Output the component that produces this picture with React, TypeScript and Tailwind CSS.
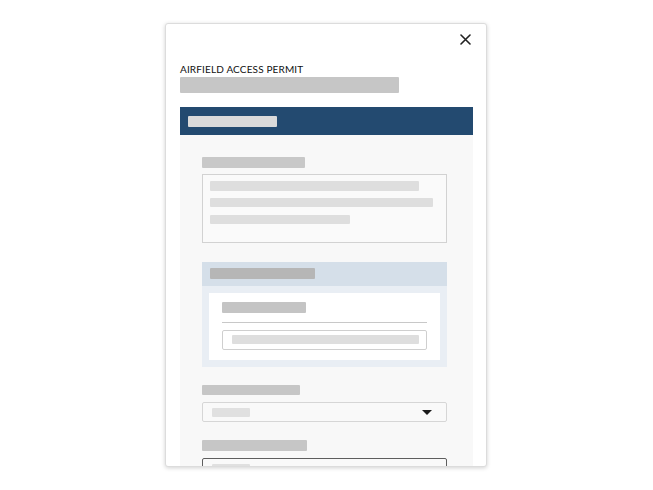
import React from "react";

// Placeholder bar used for skeleton text
function Bar({ className }: { className: string }) {
  return <div className={`rounded-[1px] ${className}`} />;
}

function Caret() {
  return (
    <svg width="10" height="5" viewBox="0 0 10 5" className="block">
      <path d="M0 0 L10 0 L5 5 Z" fill="#1a1a1a" />
    </svg>
  );
}

export default function App() {
  return (
    <div className="w-[653px] h-[490px] bg-white pt-[23px] pl-[165px] font-['Lato','Liberation_Sans',sans-serif]">
      <div className="w-[322px] h-[444px] overflow-hidden rounded-[3px] border border-[#dcdcdc] bg-white pl-[14px] pr-[13px] shadow-[0_1px_4px_rgba(0,0,0,0.18)]">
        {/* close */}
        <div className="flex justify-end pt-[9px] pr-[2px]">
          <button className="w-[12px] h-[12px] flex items-center justify-center">
            <svg width="11" height="11" viewBox="0 0 11 11">
              <path d="M1 1 L10 10 M10 1 L1 10" stroke="#222" strokeWidth="1.6" strokeLinecap="round" />
            </svg>
          </button>
        </div>

        {/* title */}
        <div className="mt-[17px] text-[10px] leading-[14px] tracking-[0.15px] text-[#111] uppercase">
          Airfield Access Permit
        </div>
        <Bar className="mt-[1px] w-[219px] h-[16px] bg-[#c6c6c6]" />

        {/* panel header */}
        <div className="mt-[14px] h-[28px] bg-[#234a70] pl-[8px] pt-[9px]">
          <Bar className="w-[89px] h-[11px] bg-[#dadada]" />
        </div>

        {/* panel body */}
        <div className="bg-[#f8f8f8] pl-[22px] pr-[26px] pt-[22px] pb-[20px]">
          <Bar className="w-[103px] h-[11px] bg-[#c8c8c8]" />
          <div className="mt-[6px] h-[69px] border border-[#d2d2d2] bg-[#fafafa] px-[7px] pt-[6px]">
            <Bar className="w-[209px] h-[10px] bg-[#dedede]" />
            <Bar className="mt-[7px] w-[223px] h-[9px] bg-[#dedede]" />
            <Bar className="mt-[8px] w-[140px] h-[9px] bg-[#dedede]" />
          </div>

          {/* group */}
          <div className="mt-[19px] bg-[#e9eef4]">
            <div className="h-[24px] bg-[#d5dfe9] pl-[8px] pt-[6px]">
              <Bar className="w-[105px] h-[11px] bg-[#b6b6b6]" />
            </div>
            <div className="p-[7px]">
              <div className="h-[67px] bg-white px-[13px] pt-[9px]">
                <Bar className="w-[84px] h-[11px] bg-[#c4c4c4]" />
                <div className="mt-[9px] h-px bg-[#c8c8c8]" />
                <div className="mt-[7px] h-[20px] border border-[#cfcfcf] rounded-[2px] pl-[9px] pt-[4px]">
                  <Bar className="w-[187px] h-[9px] bg-[#dedede]" />
                </div>
              </div>
            </div>
          </div>

          {/* select 1 */}
          <Bar className="mt-[18px] w-[98px] h-[10px] bg-[#c6c6c6]" />
          <div className="mt-[7px] h-[20px] border border-[#d6d6d6] rounded-[2px] bg-[#f9f9f9] flex items-center justify-between pl-[9px] pr-[14px]">
            <Bar className="w-[38px] h-[9px] bg-[#e0e0e0]" />
            <Caret />
          </div>

          {/* select 2 */}
          <Bar className="mt-[18px] w-[105px] h-[11px] bg-[#c6c6c6]" />
          <div className="mt-[7px] h-[20px] border border-[#5e5e5e] rounded-[2px] bg-[#f9f9f9] flex items-center justify-between pl-[9px] pr-[14px]">
            <Bar className="w-[38px] h-[9px] bg-[#e0e0e0]" />
            <Caret />
          </div>
        </div>
      </div>
    </div>
  );
}
